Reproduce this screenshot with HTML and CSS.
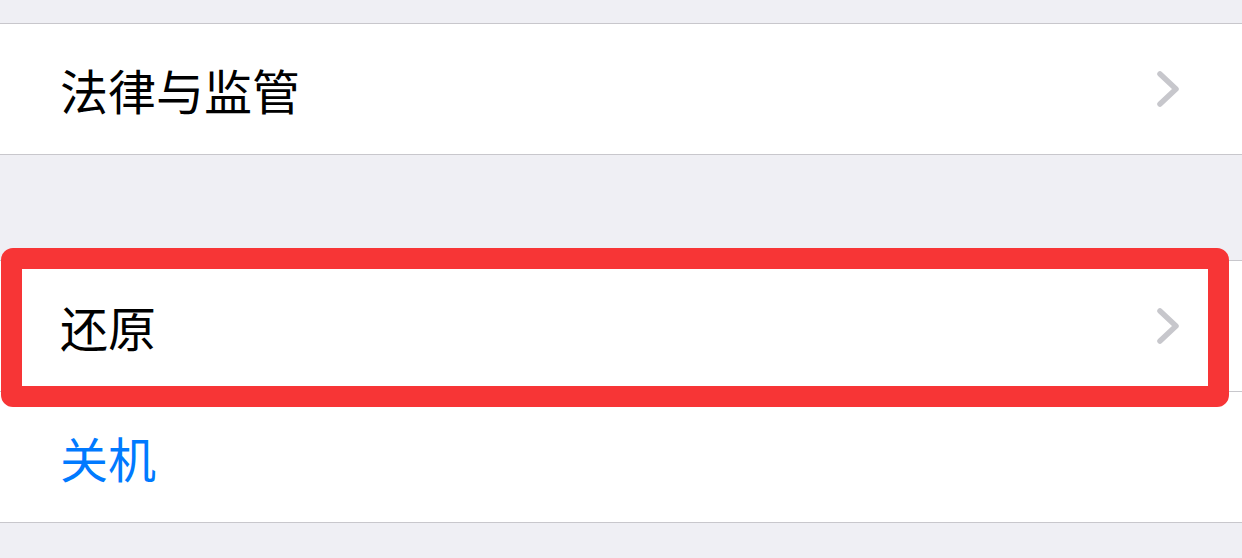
FILE: index.html
```html
<!DOCTYPE html>
<html>

<head>
  <meta charset="utf-8">
  <meta name="viewport" content="width=device-width">
  <title>通用</title>
  <link rel="stylesheet" href="styles.css">
</head>

<body>
  <!-- legal group -->
  <div class="group first">
    <div class="row">
      <span class="label">法律与监管</span>
      <svg class="chevron" width="24" height="38" viewBox="0 0 24 38">
        <polyline points="4,4 20,19 4,34" />
      </svg>
    </div>
  </div>

  <!-- reset / shutdown group -->
  <div class="group second">
    <div class="row">
      <span class="label">还原</span>
      <svg class="chevron" width="24" height="38" viewBox="0 0 24 38">
        <polyline points="4,4 20,19 4,34" />
      </svg>
      <div class="highlight"></div>
    </div>
    <div class="row">
      <span class="label action">关机</span>
    </div>
  </div>
</body>

</html>
```

FILE: styles.css
```css
body {
  margin: 0;
  background-color: #efeff4;
  font-family: "Noto Sans CJK SC", "Noto Sans", sans-serif;
}

/* grouped table sections */
.group {
  background-color: white;
  border-top: 1px solid #c8c7cc;
  border-bottom: 1px solid #c8c7cc;
}

.first {
  margin-top: 23px;
}

.second {
  margin-top: 105px;
}

.row {
  position: relative;
  height: 130px;
  display: flex;
  align-items: center;
  justify-content: space-between;
  padding: 0 62px 0 60px;
}

.row + .row {
  border-top: 1px solid #c8c7cc;
}

.label {
  font-size: 48px;
  color: black;
}

.action {
  color: #007aff;
}

.chevron {
  fill: none;
  stroke: #c7c7cc;
  stroke-width: 5.5;
  stroke-linecap: round;
  stroke-linejoin: round;
}

/* red annotation box drawn over the row */
.highlight {
  position: absolute;
  z-index: 1;
  left: 1px;
  top: -13px;
  width: 1228px;
  height: 159px;
  box-sizing: border-box;
  border: 21px solid #f73536;
  border-radius: 12px;
}
```
